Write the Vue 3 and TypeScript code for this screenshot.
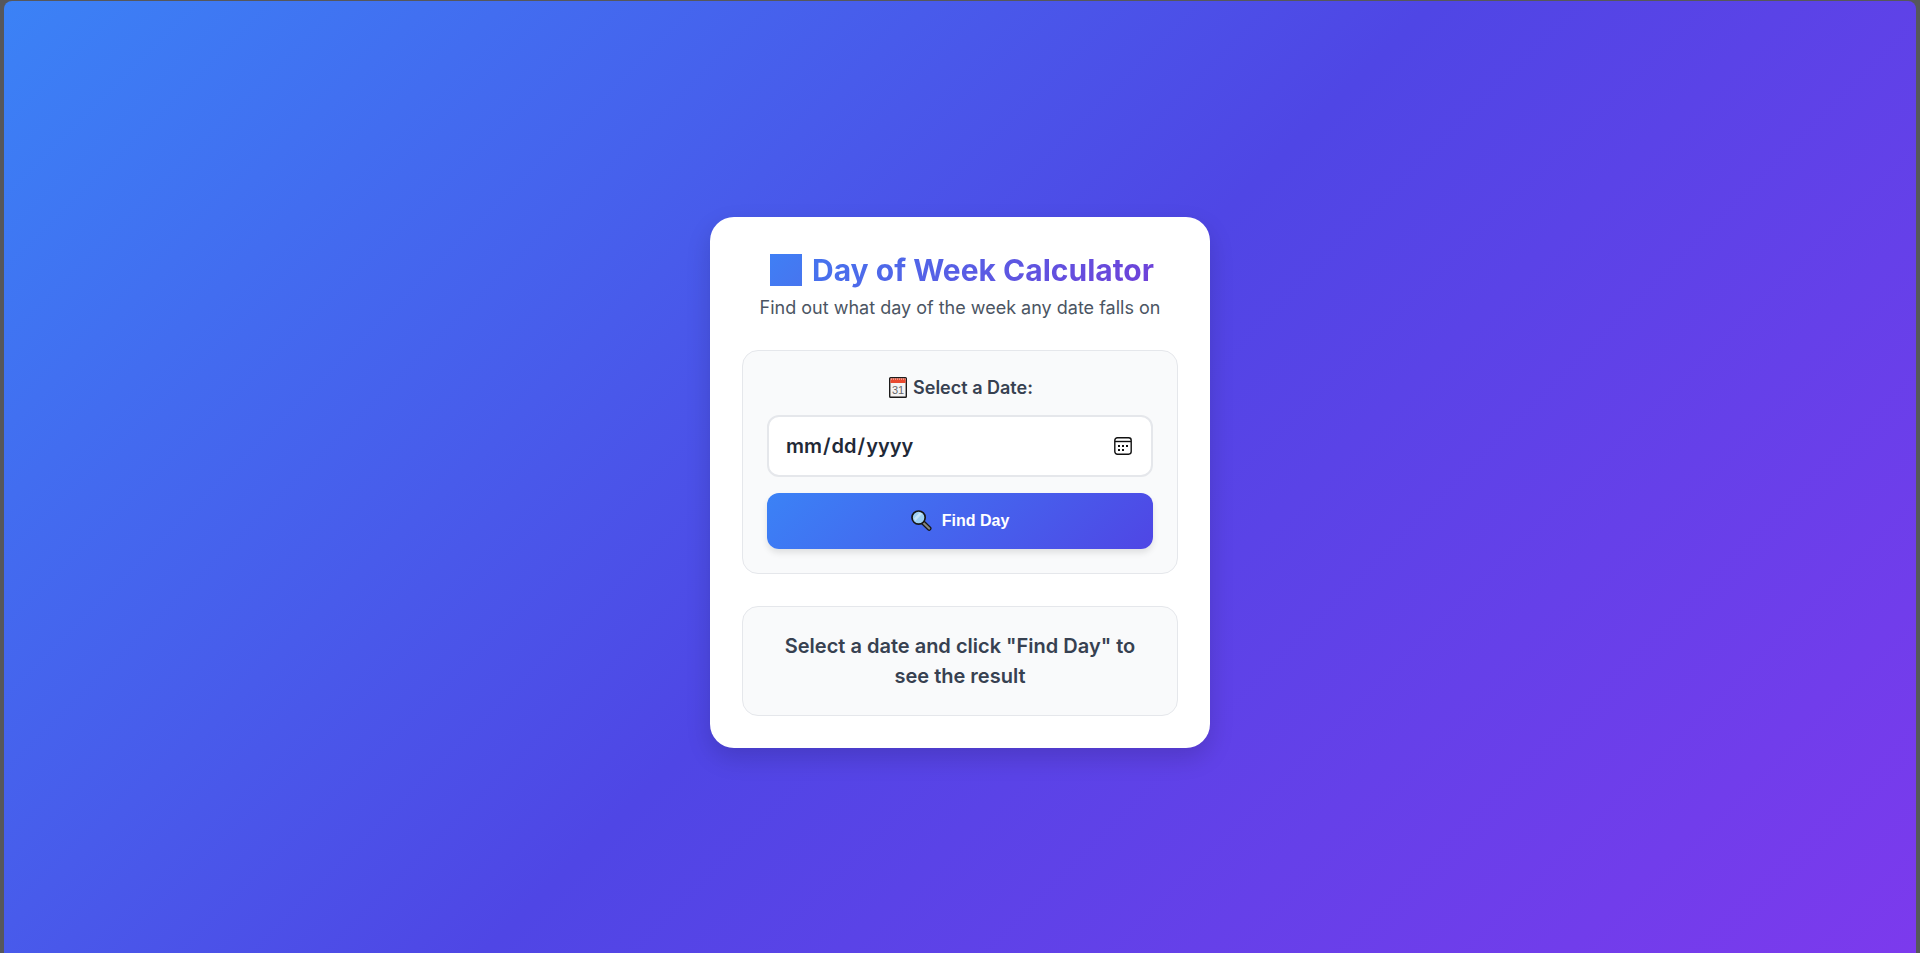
<script setup lang="ts">
import { computed, ref } from 'vue'

const selected = ref<string>('')
const answer = ref<string>('')
const message = computed<string>(
  () => answer.value || 'Select a date and click "Find Day" to see the result'
)

function findDay(): void {
  if (!selected.value) {
    answer.value = 'Please select a date first'
    return
  }
  const date = new Date(`${selected.value}T00:00:00`)
  answer.value = `That date falls on a ${date.toLocaleDateString('en-US', { weekday: 'long' })}`
}
</script>

<template>
  <div class="frame">
    <main class="page">
      <section class="card">
        <header class="intro">
          <h1 class="title"><span class="block"></span><span>Day of Week Calculator</span></h1>
          <p class="subtitle">Find out what day of the week any date falls on</p>
        </header>

        <form class="panel" @submit.prevent="findDay">
          <label class="label" for="date">
            <svg class="calendar" viewBox="0 0 18 21" aria-hidden="true">
              <rect x="0.7" y="0.7" width="16.6" height="19.6" rx="0.8" fill="#f5f3f2" stroke="#1d1b1b" stroke-width="1.4" />
              <rect x="1.4" y="1.4" width="15.2" height="4.6" fill="#e8492f" />
              <path d="M2 2.2h14.5" stroke="#f6b4a6" stroke-width="1.2" stroke-dasharray="1 1" />
              <text x="9" y="17" font-family="Liberation Sans, Arial, sans-serif" font-size="11" font-weight="400" text-anchor="middle" fill="#66666a">31</text>
            </svg>
            <span>Select a Date:</span>
          </label>
          <div class="field">
            <input id="date" v-model="selected" class="date" type="date" />
            <svg class="picker" viewBox="0 0 18 18" aria-hidden="true">
              <rect x="0.8" y="0.8" width="16.4" height="16.4" rx="2.6" fill="none" stroke="#111" stroke-width="1.4" />
              <path d="M1 4.5h16" stroke="#111" stroke-width="1.4" />
              <path d="M4 8h2v2h-2zM8 8h2v2h-2zM12 8h2v2h-2zM4 12h2v2h-2zM8 12h2v2h-2z" fill="#111" />
            </svg>
          </div>
          <button class="find" type="submit">
            <svg class="lens" viewBox="0 0 21 21" aria-hidden="true">
              <path d="M11.5 12l6.7 6.5" stroke="#171717" stroke-width="4.6" stroke-linecap="round" />
              <path d="M12.5 13l5.7 5.5" stroke="#85857f" stroke-width="2.2" stroke-linecap="round" />
              <circle cx="7.6" cy="7.6" r="6.6" fill="#9dd0f3" stroke="#171717" stroke-width="1.7" />
              <path d="M3 8.5l5.5-5.8 3 .8-7.3 7.6z" fill="#c5e5fa" />
            </svg>
            <span>Find Day</span>
          </button>
        </form>

        <output class="result" for="date">{{ message }}</output>
      </section>
    </main>
  </div>
</template>

<style>
body {
  margin: 0;
}
</style>

<style scoped>
* {
  box-sizing: border-box;
}
.frame {
  min-height: 100vh;
  padding: 1px 4px 0;
  display: flex;
  background: #56575b;
  font-family: Inter, "Liberation Sans", sans-serif;
}
.page {
  flex: 1;
  display: flex;
  align-items: center;
  justify-content: center;
  padding: 16px;
  padding-bottom: 6px;
  border-radius: 8px 8px 0 0;
  background: linear-gradient(135deg, #3b82f6 0%, #4f46e5 50%, #7c3aed 100%);
}
.card {
  width: 100%;
  max-width: 500px;
  padding: 32px;
  display: flex;
  flex-direction: column;
  gap: 32px;
  border-radius: 24px;
  background: #fff;
  box-shadow: 0 10px 25px rgba(0, 0, 0, 0.15);
  text-align: center;
}
.intro {
  display: flex;
  flex-direction: column;
  align-items: center;
  gap: 7px;
}
.title {
  margin: 0;
  padding-left: 4px;
  width: 100%;
  display: flex;
  align-items: center;
  justify-content: center;
  gap: 10px;
  font-size: 30px;
  font-weight: 700;
  line-height: 42px;
}
.title span:last-child {
  color: transparent;
  background: linear-gradient(135deg, #4475ef, #7040d8);
  -webkit-background-clip: text;
  background-clip: text;
}
.block {
  width: 32px;
  height: 32px;
  background: linear-gradient(135deg, #3f7ff5, #4775ef);
}
.subtitle {
  margin: 0;
  color: #4b5563;
  font-size: 18px;
  line-height: 20px;
}
.panel,
.result {
  padding: 24px;
  border: 1px solid #e5e7eb;
  border-radius: 16px;
  background: #f9fafb;
}
.panel {
  display: flex;
  flex-direction: column;
}
.label {
  margin-bottom: 15px;
  padding-left: 2px;
  display: flex;
  align-items: center;
  justify-content: center;
  gap: 6px;
  color: #374151;
  font-size: 18px;
  font-weight: 600;
  line-height: 25px;
}
.calendar {
  width: 18px;
  height: 21px;
}
.field {
  position: relative;
  margin-bottom: 16px;
}
.date {
  display: block;
  width: 100%;
  height: 62px;
  padding: 16px;
  border: 2px solid #e5e7eb;
  border-radius: 12px;
  background: #fff;
  color: #1f2937;
  font-family: inherit;
  font-size: 20px;
  font-weight: 600;
}
.date::-webkit-calendar-picker-indicator {
  opacity: 0;
}
.picker {
  position: absolute;
  top: 22px;
  right: 21px;
  width: 18px;
  height: 18px;
  pointer-events: none;
}
.find {
  height: 56px;
  display: flex;
  align-items: center;
  justify-content: center;
  gap: 10px;
  border: 0;
  border-radius: 12px;
  background: linear-gradient(135deg, #3b82f6, #4f46e5);
  box-shadow: 0 4px 6px rgba(0, 0, 0, 0.1);
  color: #fff;
  font-family: "Liberation Sans", Arial, sans-serif;
  font-size: 16px;
  font-weight: 700;
  cursor: pointer;
}
.lens {
  width: 21px;
  height: 21px;
}
.result {
  display: block;
  color: #374151;
  font-size: 20px;
  font-weight: 600;
  line-height: 30px;
}
</style>
